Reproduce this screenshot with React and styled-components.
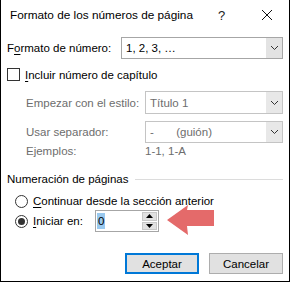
import React from "react";
import styled, { createGlobalStyle } from "styled-components";

const Global = createGlobalStyle`
  html, body {
    margin: 0;
    padding: 0;
    background: #fff;
  }
  body {
    font-family: "Liberation Sans", Arial, sans-serif;
    font-size: 11.5px;
    color: #000;
  }
`;

const Dialog = styled.div`
  position: relative;
  width: 290px;
  height: 282px;
  box-sizing: border-box;
  border: 1px solid #000;
  border-top: none;
  background: #fff;
  display: flex;
  flex-direction: column;
`;

const TitleBar = styled.div`
  height: 30px;
  display: flex;
  align-items: center;
  padding-left: 9px;
`;

const Title = styled.div`
  flex: 1;
  font-size: 11.8px;
  white-space: nowrap;
  color: #000;
`;

const TitleButton = styled.div`
  width: 45px;
  height: 30px;
  display: flex;
  align-items: center;
  justify-content: center;
  font-size: 13px;
  color: #222;
`;

const Body = styled.div`
  padding: 0 6px;
  display: flex;
  flex-direction: column;
`;

const Row = styled.div`
  display: flex;
  align-items: center;
  height: ${(p) => p.h || 22}px;
  margin-top: ${(p) => p.mt || 0}px;
  padding-left: ${(p) => p.indent || 0}px;
`;

const Label = styled.span`
  width: ${(p) => (p.w ? `${p.w}px` : "auto")};
  flex-shrink: 0;
  white-space: nowrap;
  color: ${(p) => (p.disabled ? "#6d6d6d" : "#000")};
`;

const Key = styled.span`
  text-decoration: underline;
  text-underline-offset: 2px;
`;

const Select = styled.div`
  flex: 1;
  height: ${(p) => p.h || 22}px;
  box-sizing: border-box;
  border: 1px solid ${(p) => (p.disabled ? "#c4c4c4" : "#a6a6a6")};
  display: flex;
  align-items: stretch;
  color: ${(p) => (p.disabled ? "#6d6d6d" : "#000")};
`;

const SelectValue = styled.div`
  flex: 1;
  display: flex;
  align-items: center;
  padding-left: 4px;
  white-space: pre;
`;

const SelectArrow = styled.div`
  width: 16px;
  background: ${(p) => (p.disabled ? "#e8e8e8" : "#e3e3e3")};
  display: flex;
  align-items: center;
  justify-content: center;
`;

const Checkbox = styled.span`
  width: 13px;
  height: 13px;
  box-sizing: border-box;
  border: 1px solid #333;
  margin-right: 5px;
  flex-shrink: 0;
`;

const GroupHeader = styled.div`
  display: flex;
  align-items: center;
  height: 16px;
  margin-top: 12px;
  white-space: nowrap;

  &::after {
    content: "";
    flex: 1;
    height: 1px;
    background: #dcdcdc;
    margin-left: 7px;
  }
`;

const Radio = styled.span`
  width: 13px;
  height: 13px;
  box-sizing: border-box;
  border: 1px solid #333;
  border-radius: 50%;
  margin-right: 5px;
  flex-shrink: 0;
  display: flex;
  align-items: center;
  justify-content: center;

  &::after {
    content: "";
    width: 7px;
    height: 7px;
    border-radius: 50%;
    background: ${(p) => (p.checked ? "#333" : "transparent")};
  }
`;

const SpinBox = styled.div`
  width: 64px;
  height: 22px;
  box-sizing: border-box;
  border: 1px solid #a6a6a6;
  display: flex;
  align-items: stretch;
`;

const SpinValue = styled.div`
  flex: 1;
  display: flex;
  align-items: center;
  padding-left: 1px;
`;

const Selected = styled.span`
  background: #99c9ef;
  padding: 0 1px;
  line-height: 16px;
`;

const SpinButtons = styled.div`
  width: 15px;
  margin: 1px 1px 1px 0;
  display: flex;
  flex-direction: column;
  gap: 1px;
`;

const SpinButton = styled.div`
  flex: 1;
  background: #e1e1e1;
  border: 1px solid #c8c8c8;
  display: flex;
  align-items: center;
  justify-content: center;
`;

const Buttons = styled.div`
  display: flex;
  justify-content: flex-end;
  gap: 10px;
  margin-top: 21px;
`;

const Button = styled.div`
  width: 74px;
  height: 21px;
  box-sizing: border-box;
  background: #e1e1e1;
  border: ${(p) => (p.primary ? "2px solid #0078d7" : "1px solid #adadad")};
  display: flex;
  align-items: center;
  justify-content: center;
  color: #000;
`;

const Arrow = styled.svg`
  position: absolute;
  left: 165px;
  top: 204px;
`;

const Chevron = () => (
  <svg width="9" height="6" viewBox="0 0 9 6">
    <path d="M1 1 L4.5 4.5 L8 1" fill="none" stroke="#333" strokeWidth="1" />
  </svg>
);

const Tri = ({ up }) => (
  <svg width="7" height="4" viewBox="0 0 7 4">
    <path d={up ? "M3.5 0 L7 4 L0 4 Z" : "M0 0 L7 0 L3.5 4 Z"} fill="#000" />
  </svg>
);

export default function App() {
  return (
    <>
      <Global />
      <Dialog>
        <TitleBar>
          <Title>Formato de los números de página</Title>
          <TitleButton>?</TitleButton>
          <TitleButton>
            <svg width="12" height="12" viewBox="0 0 12 12">
              <path d="M1 1 L11 11 M11 1 L1 11" stroke="#111" strokeWidth="1" />
            </svg>
          </TitleButton>
        </TitleBar>
        <Body>
          <Row mt={7} h={22}>
            <Label w={114}>
              F<Key>o</Key>rmato de número:
            </Label>
            <Select h={22}>
              <SelectValue>1, 2, 3, …</SelectValue>
              <SelectArrow>
                <Chevron />
              </SelectArrow>
            </Select>
          </Row>
          <Row mt={7} h={17}>
            <Checkbox />
            <Label>
              <Key>I</Key>ncluir número de capítulo
            </Label>
          </Row>
          <Row mt={8} h={23} indent={19}>
            <Label w={119} disabled>
              Empezar con el estilo:
            </Label>
            <Select h={23} disabled>
              <SelectValue>Título 1</SelectValue>
              <SelectArrow disabled>
                <Chevron />
              </SelectArrow>
            </Select>
          </Row>
          <Row mt={7} h={22} indent={19}>
            <Label w={119} disabled>
              Usar separador:
            </Label>
            <Select h={22} disabled>
              <SelectValue>{"-       (guión)"}</SelectValue>
              <SelectArrow disabled>
                <Chevron />
              </SelectArrow>
            </Select>
          </Row>
          <Row h={16} indent={19}>
            <Label w={119} disabled>
              Ejemplos:
            </Label>
            <Label disabled>1-1, 1-A</Label>
          </Row>
          <GroupHeader>Numeración de páginas</GroupHeader>
          <Row mt={5} h={18} indent={8}>
            <Radio />
            <Label>
              <Key>C</Key>ontinuar desde la sección anterior
            </Label>
          </Row>
          <Row h={22} indent={8}>
            <Radio checked />
            <Label w={62}>
              <Key>I</Key>niciar en:
            </Label>
            <SpinBox>
              <SpinValue>
                <Selected>0</Selected>
              </SpinValue>
              <SpinButtons>
                <SpinButton>
                  <Tri up />
                </SpinButton>
                <SpinButton>
                  <Tri />
                </SpinButton>
              </SpinButtons>
            </SpinBox>
          </Row>
          <Buttons>
            <Button primary>Aceptar</Button>
            <Button>Cancelar</Button>
          </Buttons>
        </Body>
        <Arrow width="50" height="32" viewBox="0 0 50 32">
          <path d="M1 16 L22 1 L21 6 L48 6 L48 22 L21 22 L22 31 Z" fill="#e46a6a" />
        </Arrow>
      </Dialog>
    </>
  );
}
